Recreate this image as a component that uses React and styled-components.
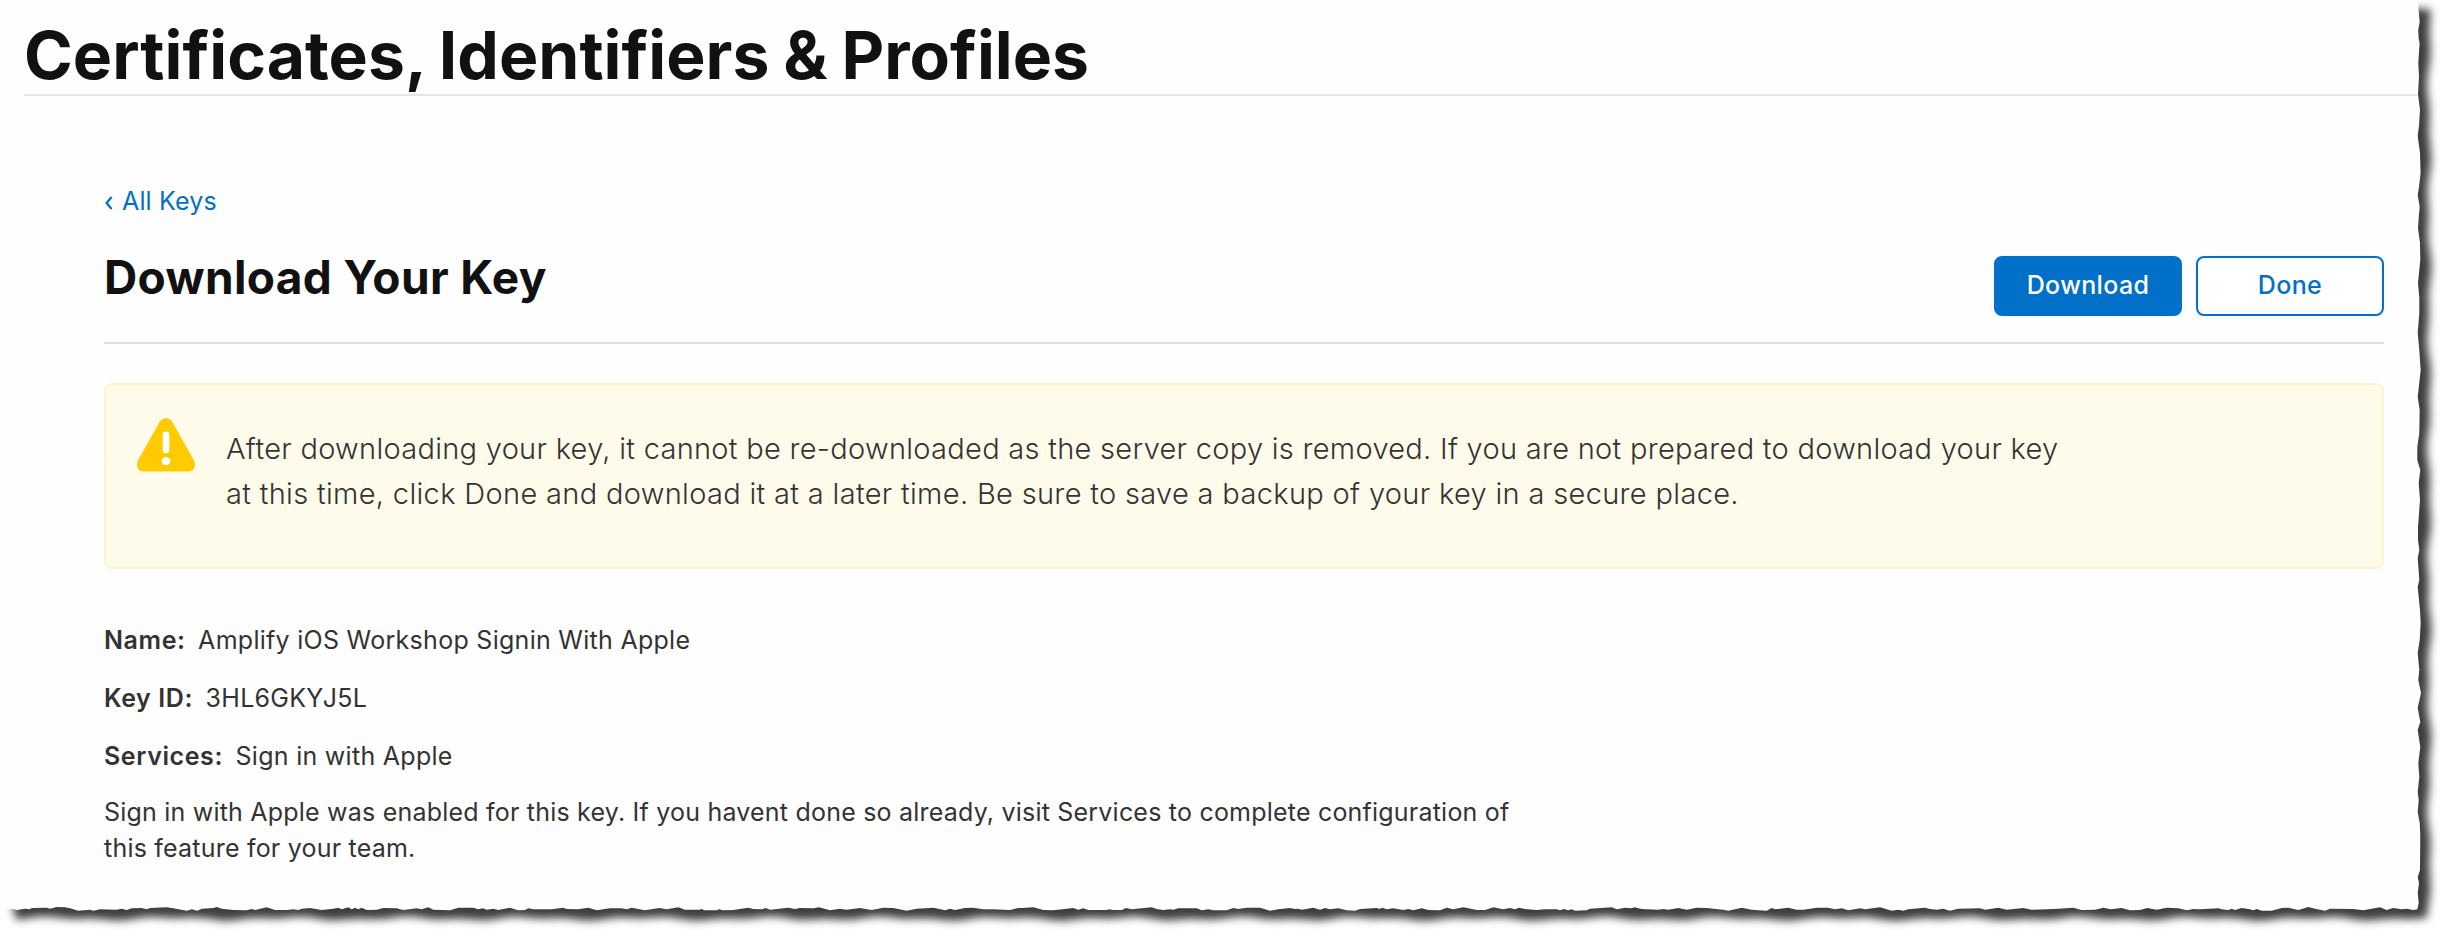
import React from 'react';
import styled, { createGlobalStyle } from 'styled-components';

const GlobalStyle = createGlobalStyle`
  *, *::before, *::after { box-sizing: border-box; }
  body { margin: 0; background: #ffffff; overflow: hidden; }
`;

const WIDTH = 2442;
const HEIGHT = 932;

/* Torn outline of the sheet: the right side from top to bottom, as x, y pairs. */
const rightEdge = [
  2419, 0, 2418.3, 7, 2419.7, 22, 2418.2, 30, 2418.6, 38, 2419.6, 43, 2418.3, 63, 2419, 77, 2418, 94,
  2420, 110, 2419, 126, 2417.7, 136, 2420, 153, 2420.6, 173, 2419, 187, 2417.7, 195, 2419.7, 207,
  2418.9, 215, 2418, 228, 2420, 243, 2420.3, 260, 2418, 283, 2419.3, 298, 2419.3, 313, 2417.7, 333,
  2419.3, 350, 2420.7, 370, 2417.7, 397, 2419.7, 410, 2419.3, 433, 2417.3, 447, 2417.3, 460,
  2420.3, 470, 2418.7, 483, 2420, 500, 2418, 527, 2418, 540, 2419.3, 550, 2417.7, 558, 2419.3, 580,
  2417.7, 587, 2420, 610, 2420.7, 623, 2419.7, 640, 2417.7, 653, 2419.3, 670, 2418.3, 680, 2421, 693,
  2417.7, 708, 2420.3, 722, 2417.7, 730, 2420.3, 747, 2418.3, 763, 2419.3, 777, 2417.7, 792,
  2418.7, 800, 2417.7, 812, 2419.7, 823, 2420.3, 835, 2420, 870, 2417.7, 877, 2419, 883, 2417.7, 893,
  2418.7, 903, 2417.4, 909,
];

/* Bottom side from left to right, as x, y pairs, in thirds of a pixel from each section's origin. */
const bottomSections = [
  {
    x: 0,
    y: 860,
    points: [
      0, 148, 40, 147, 50, 150, 75, 146, 90, 148, 95, 144, 140, 143, 150, 146, 170, 141, 195, 142,
      210, 145, 235, 152, 270, 149, 280, 152, 300, 148, 350, 149, 365, 146, 380, 150, 395, 145,
      425, 144, 440, 148, 450, 144, 500, 142, 520, 145, 560, 152, 575, 148, 592, 152, 605, 146,
      640, 144, 650, 141, 665, 146, 700, 150, 740, 151, 755, 147, 765, 150, 800, 142, 825, 150,
      860, 150, 880, 148, 895, 150, 905, 146, 930, 144, 965, 150, 1000, 146, 1015, 143, 1025, 148,
      1045, 142, 1055, 148, 1065, 143, 1075, 148, 1085, 143, 1100, 150, 1130, 149, 1150, 144,
      1190, 145, 1210, 150, 1250, 145, 1265, 148, 1285, 142, 1300, 149, 1350, 151, 1375, 143,
      1420, 143, 1435, 148, 1448, 145, 1460, 149, 1480, 146, 1495, 150,
    ],
  },
  {
    x: 500,
    y: 895,
    points: [
      5, 43, 30, 38, 55, 46, 75, 45, 85, 40, 100, 43, 155, 43, 190, 38, 200, 42, 235, 43, 265, 38,
      290, 46, 330, 40, 365, 40, 380, 43, 395, 38, 435, 46, 478, 39, 500, 43, 535, 37, 555, 44,
      600, 44, 604, 41, 612, 46, 650, 46, 658, 43, 668, 46, 700, 45, 745, 38, 760, 42, 785, 43,
      797, 39, 810, 44, 865, 38, 885, 42, 900, 39, 940, 40, 957, 37, 990, 46, 1020, 41, 1030, 43,
      1040, 44, 1080, 39, 1115, 45, 1150, 38, 1180, 39, 1220, 47, 1250, 41, 1300, 38, 1335, 46,
      1350, 41, 1365, 45, 1395, 39, 1420, 38, 1450, 43, 1480, 43, 1530, 45, 1555, 39,
    ],
  },
  {
    x: 1020,
    y: 895,
    points: [
      5, 39, 40, 37, 70, 45, 100, 46, 160, 39, 175, 44, 190, 40, 205, 45, 260, 45, 268, 43, 280, 45,
      305, 45, 318, 39, 335, 43, 395, 37, 410, 42, 430, 45, 450, 43, 460, 44, 475, 40, 530, 40,
      545, 46, 565, 43, 580, 46, 620, 46, 640, 39, 655, 42, 680, 38, 720, 38, 750, 47, 775, 43,
      810, 39, 825, 42, 835, 41, 845, 44, 880, 38, 900, 44, 915, 39, 930, 43, 955, 40, 980, 46,
      1005, 47, 1020, 42, 1070, 39, 1078, 42, 1087, 38, 1100, 43, 1120, 40, 1150, 45, 1165, 42,
      1180, 46, 1205, 40, 1225, 45, 1260, 46, 1280, 38, 1300, 43, 1330, 37, 1370, 45, 1395, 45,
      1420, 37, 1450, 43, 1470, 39, 1485, 43, 1497, 38, 1515, 42, 1550, 45,
    ],
  },
  {
    x: 1540,
    y: 895,
    points: [
      15, 43, 50, 43, 60, 46, 72, 42, 85, 46, 95, 43, 105, 47, 140, 46, 150, 41, 215, 37, 230, 43,
      255, 38, 275, 40, 283, 37, 305, 42, 355, 44, 370, 42, 385, 44, 415, 39, 440, 44, 470, 38,
      500, 39, 550, 44, 565, 47, 605, 38, 635, 44, 680, 47, 695, 39, 705, 43, 745, 38, 770, 44,
      790, 44, 830, 38, 865, 38, 885, 43, 905, 40, 925, 46, 960, 40, 975, 43, 1020, 37, 1055, 47,
      1075, 44, 1090, 47, 1105, 43, 1155, 38, 1170, 42, 1190, 44, 1210, 41, 1230, 47, 1255, 41,
      1320, 40, 1335, 44, 1375, 38, 1400, 44, 1450, 39, 1475, 44, 1520, 43, 1555, 41, 1600, 38,
      1625, 45, 1665, 44, 1690, 38, 1712, 43, 1745, 39, 1770, 46, 1800, 45, 1822, 39, 1850, 44,
      1880, 38, 1915, 40, 1940, 46, 1960, 42,
    ],
  },
  {
    x: 2200,
    y: 780,
    points: [
      0, 388, 55, 385, 65, 388, 85, 390, 95, 386, 105, 390, 125, 384, 150, 388, 160, 391, 170, 387,
      185, 392, 215, 392, 245, 384, 265, 383, 295, 390, 325, 381, 345, 386, 375, 392, 390, 386,
      460, 387, 490, 391, 540, 382, 560, 390, 580, 384, 605, 388, 620, 386, 640, 390, 652, 388,
    ],
  },
];

const toPairs = (flat) => {
  const pairs = [];
  for (let i = 0; i < flat.length; i += 2) pairs.push([flat[i], flat[i + 1]]);
  return pairs;
};

const rightPoints = toPairs(rightEdge);
const bottomPoints = bottomSections.flatMap(({ x, y, points }) =>
  toPairs(points).map(([px, py]) => [x + px / 3, y + py / 3])
);

const sheetOutline = [[0, 0], ...rightPoints, ...bottomPoints.slice().reverse()]
  .map(([x, y]) => `${x.toFixed(1)},${y.toFixed(1)}`)
  .join(' ');

const wave = (t) => Math.sin(t / 19) * 1.3 + Math.sin(t / 8.3 + 1) * 0.9;
const shadowPoints = [[10, 895], [2400, 9]];
for (let y = 9; y < 918; y += 6) shadowPoints.push([2429 + wave(y), y]);
for (let x = 2428; x > 10; x -= 6) shadowPoints.push([x, 918.5 + wave(x + 40)]);
const shadowOutline = shadowPoints.map(([x, y]) => `${x},${y.toFixed(1)}`).join(' ');

const Page = styled.div`
  position: relative;
  width: ${WIDTH}px;
  height: ${HEIGHT}px;
  overflow: hidden;
  font-family: Inter, 'Liberation Sans', sans-serif;
  font-size: 25px;
  color: #333333;
`;

const SheetDrawing = styled.svg`
  position: absolute;
  inset: 0;
  display: block;
`;

const Sheet = styled.div`
  position: relative;
  display: flex;
  flex-direction: column;
  width: 2418px;
  padding-left: 24px;
`;

const SiteHeader = styled.header`
  padding-top: 16px;
  border-bottom: 2px solid #e5e5e5;
`;

const SiteTitle = styled.h1`
  margin: 0;
  font-size: 66px;
  line-height: 78px;
  font-weight: 700;
  letter-spacing: 0.02px;
  word-spacing: -1.8px;
  color: #111111;
`;

const Main = styled.main`
  display: flex;
  flex-direction: column;
  width: 2360px;
  padding: 90px 0 0 80px;
`;

const BackLink = styled.a`
  display: flex;
  align-items: center;
  align-self: flex-start;
  gap: 9px;
  height: 30px;
  padding-left: 1px;
  line-height: 30px;
  letter-spacing: 0.15px;
  color: #0070c9;
  text-decoration: none;
`;

const Chevron = styled.svg`
  flex: none;
  margin-top: 4px;
`;

const TitleBar = styled.div`
  display: flex;
  justify-content: space-between;
  align-items: flex-start;
  height: 97px;
  margin-top: 31px;
  border-bottom: 2px solid #dddddd;
`;

const PageTitle = styled.h2`
  margin: 0;
  font-size: 46px;
  line-height: 60px;
  font-weight: 700;
  letter-spacing: 0.35px;
  color: #111111;
`;

const Actions = styled.div`
  display: flex;
  gap: 14px;
  padding-top: 9px;
`;

const Button = styled.button`
  width: 188px;
  height: 60px;
  padding: 0 0 2px;
  border: 2px solid #0070c9;
  border-radius: 8px;
  background: ${({ $primary }) => ($primary ? '#0070c9' : '#ffffff')};
  color: ${({ $primary }) => ($primary ? '#ffffff' : '#0070c9')};
  font: 500 25px/30px Inter, 'Liberation Sans', sans-serif;
  letter-spacing: 0.35px;
`;

const Alert = styled.section`
  display: flex;
  align-items: flex-start;
  height: 186px;
  margin-top: 39px;
  padding: 0 31px;
  border: 2px solid #fff3cd;
  border-radius: 8px;
  background: #fffbeb;
`;

const WarningIcon = styled.svg`
  flex: none;
  margin: 33px 31px 0 0;
`;

const AlertText = styled.p`
  width: 1845px;
  margin: 41px 0 0;
  font-size: 29px;
  line-height: 45px;
  font-weight: 300;
`;

const Tracked = styled.span`
  letter-spacing: ${({ $spacing }) => $spacing}px;
`;

const Details = styled.dl`
  display: flex;
  flex-direction: column;
  gap: 22px;
  margin: 53px 0 20px;
`;

const DetailRow = styled.div`
  display: flex;
  gap: 12.5px;
  line-height: 36px;
`;

const DetailLabel = styled.dt`
  font-weight: 600;
  letter-spacing: 0.6px;
`;

const DetailValue = styled.dd`
  margin: 0;
  letter-spacing: 0.28px;
`;

const Note = styled.p`
  width: 1415px;
  margin: 0;
  line-height: 36px;
  letter-spacing: 0.21px;
`;

const details = [
  ['Name:', 'Amplify iOS Workshop Signin With Apple'],
  ['Key ID:', '3HL6GKYJ5L'],
  ['Services:', 'Sign in with Apple'],
];

export default function App() {
  return (
    <Page>
      <GlobalStyle />
      <SheetDrawing width={WIDTH} height={HEIGHT} aria-hidden="true">
        <defs>
          <filter id="soft" filterUnits="userSpaceOnUse" x="-20" y="-20" width="2500" height="990">
            <feGaussianBlur stdDeviation="4" />
          </filter>
        </defs>
        <polygon points={shadowOutline} fill="#000000" fillOpacity="0.76" filter="url(#soft)" />
        <polygon points={sheetOutline} fill="#fefefe" />
      </SheetDrawing>
      <Sheet>
        <SiteHeader>
          <SiteTitle>Certificates, Identifiers &amp; Profiles</SiteTitle>
        </SiteHeader>
        <Main>
          <BackLink>
            <Chevron width="8" height="14" viewBox="0 0 8 14">
              <path d="M6.6 1 L1.6 7 L6.6 13" fill="none" stroke="currentColor" strokeWidth="2.2" />
            </Chevron>
            All Keys
          </BackLink>
          <TitleBar>
            <PageTitle>Download Your Key</PageTitle>
            <Actions>
              <Button $primary>Download</Button>
              <Button>Done</Button>
            </Actions>
          </TitleBar>
          <Alert>
            <WarningIcon width="58" height="54" viewBox="0 0 58 54">
              <path
                d="M22.6 4 C25.2 -1.1 32.8 -1.1 35.4 4 L57 42.6 C59.6 48.3 56.5 53.5 51 53.5 H7 C1.5 53.5 -1.6 48.3 1 42.6 Z"
                fill="#fecb00"
              />
              <rect x="25.7" y="13.6" width="6.6" height="21.8" rx="3.3" fill="#ffffff" />
              <ellipse cx="29" cy="43.1" rx="4.4" ry="4" fill="#ffffff" />
            </WarningIcon>
            <AlertText>
              <Tracked $spacing={0.29}>
                After downloading your key, it cannot be re-downloaded as the server copy is removed.
                If you are not prepared to download your key{' '}
              </Tracked>
              <Tracked $spacing={0.33}>
                at this time, click Done and download it at a later time. Be sure to save a backup of
                your key in a secure place.
              </Tracked>
            </AlertText>
          </Alert>
          <Details>
            {details.map(([label, value]) => (
              <DetailRow key={label}>
                <DetailLabel>{label}</DetailLabel>
                <DetailValue>{value}</DetailValue>
              </DetailRow>
            ))}
          </Details>
          <Note>
            Sign in with Apple was enabled for this key. If you havent done so already, visit Services
            to complete configuration of this feature for your team.
          </Note>
        </Main>
      </Sheet>
    </Page>
  );
}
